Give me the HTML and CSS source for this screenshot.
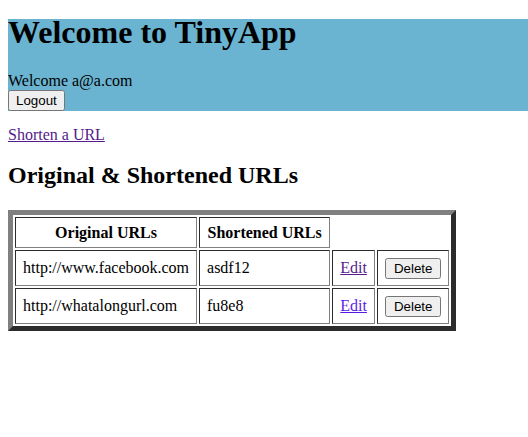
FILE: index.html
```html
<!DOCTYPE html>
<html>
<head>
<meta charset="utf-8">
<title>TinyApp</title>
<link rel="stylesheet" href="styles.css">
</head>
<body>
<header class="site-header">
  <h1 class="title">Welcome to TinyApp</h1>
  <div class="user">Welcome a@a.com</div>
  <button class="btn">Logout</button>
</header>
<p class="links"><a class="visited" href="#">Shorten a URL</a></p>
<h2 class="subtitle">Original &amp; Shortened URLs</h2>
<table class="urls">
  <tr>
    <th>Original URLs</th>
    <th>Shortened URLs</th>
  </tr>
  <tr>
    <td>http://www.facebook.com</td>
    <td>asdf12</td>
    <td><a class="visited" href="#">Edit</a></td>
    <td><button class="btn btn-del">Delete</button></td>
  </tr>
  <tr>
    <td>http://whatalongurl.com</td>
    <td>fu8e8</td>
    <td><a class="fresh" href="#">Edit</a></td>
    <td><button class="btn btn-del">Delete</button></td>
  </tr>
</table>
</body>
</html>
```
FILE: styles.css
```css
body {
  margin: 8px 0 8px 8px;
  font-family: "Liberation Serif", serif;
  font-size: 16px;
  color: #000;
}
.site-header {
  display: block;
  background: #6ab4d1;
  margin-top: 11px;
}
.title {
  font-size: 32px;
  line-height: 27px;
  margin: 0 0 26px 0;
}
.btn {
  font-family: "Liberation Sans", Arial, sans-serif;
  font-size: 13.33px;
}
.btn-del { padding: 1px 7px; }
.visited { color: #551a8b; }
.fresh { color: #5d1ae6; }
.links { margin: 15px 0 16px; }
.subtitle { font-size: 24px; margin: 18px 0 21px; }
.urls {
  border: 5px outset #808080;
  border-spacing: 2px;
}
.urls th, .urls td {
  border: 1px inset #808080;
}
.urls th { padding: 5.5px 7.5px; }
.urls td { padding: 6.5px 7px; }
```
